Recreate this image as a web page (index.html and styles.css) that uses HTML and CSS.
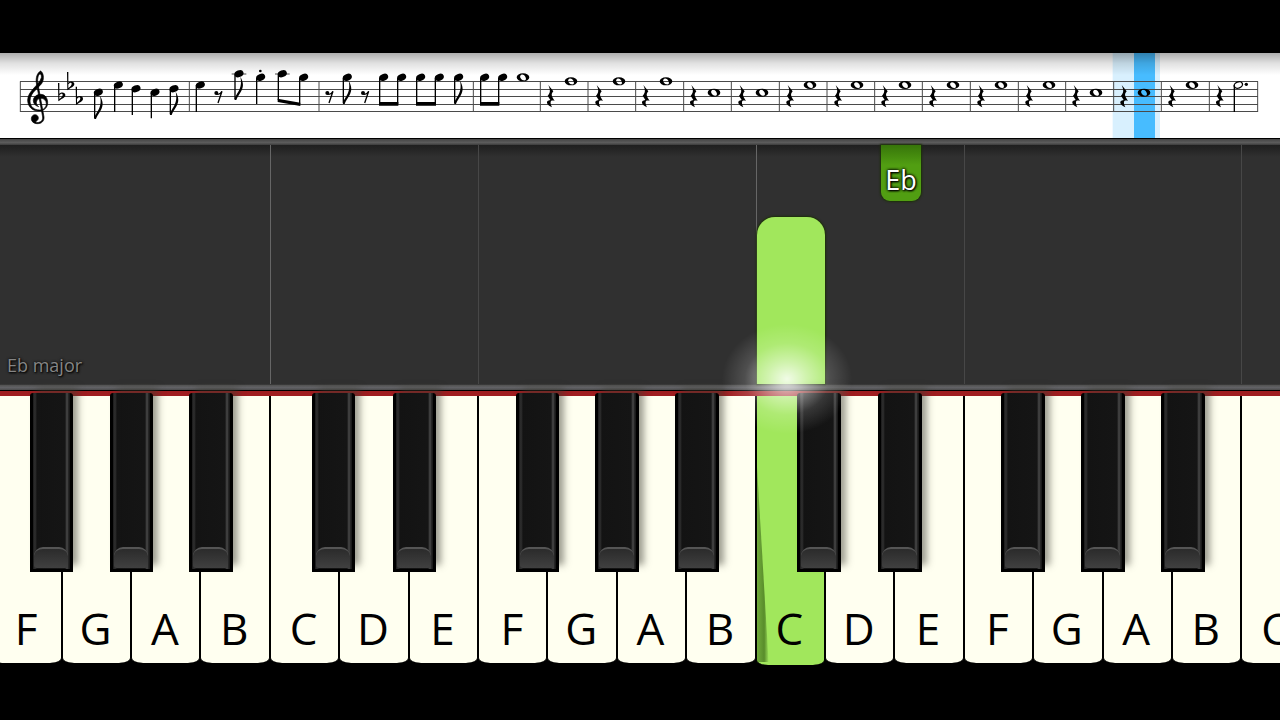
FILE: index.html
```html
<!DOCTYPE html>
<html lang="en">
<head>
  <meta charset="UTF-8">
  <meta name="viewport" content="width=device-width, initial-scale=1">
  <title>Piano lesson</title>
  <link rel="stylesheet" href="styles.css">
</head>
<body>
  <main class="player">

    <!-- Score -->
    <svg class="score" viewBox="0 0 3840 255" role="img" aria-label="Score">
      <defs>
        <linearGradient id="paper" x1="0" y1="0" x2="0" y2="1">
          <stop offset="0" stop-color="#000" stop-opacity=".32"/>
          <stop offset=".12" stop-color="#000" stop-opacity=".12"/>
          <stop offset=".26" stop-color="#000" stop-opacity="0"/>
        </linearGradient>
        <g id="clef" stroke="#000" stroke-width="2">
          <path d="M40 0C49 6 50 22 46 32C40 48 8 62 8 90C8 108 22 117 36 117C50 117 57 108 57 98C57 88 49 82 41 82C32 82 27 88 27 95C27 101 30 104 34 107C24 104 18 98 18 89C18 78 28 70 40 70C52 70 61 80 61 95C61 110 50 120 34 120C14 120 1 106 1 87C1 60 36 42 42 20C43 13 41 9 38 9Z"/>
          <path d="M38 9C33 10 30 22 31 34L50 138C51 150 43 158 31 158C20 158 12 152 12 143C12 136 17 131 23 131C29 131 33 136 33 141C33 147 28 150 25 152C27 155 32 155 35 154C43 152 47 146 46 138L27 36C25 20 29 6 40 0Z"/>
        </g>
        <path id="flat" fill-rule="evenodd" d="M-2 0h4v32c6-6 18-5 18 4c0 8-11 11-21 19zM2 37v11c6-4 10-8 10-13c0-5-7-3-10 2z"/>
        <ellipse id="head" rx="14" ry="10" transform="rotate(-22)"/>
        <path id="flag" d="M-1 0C0-20 25-30 16-70C36-36 13-24 4 0z"/>
        <path id="whole" fill-rule="evenodd" d="M-19 0a19 12 0 1 0 38 0a19 12 0 1 0-38 0zM-8-5C-5-11 3-9 7-2C11 5 8 10 3 9C-3 9-11 1-8-5z"/>
        <path id="rest4" d="M-6 0L9 19C2 27 2 32 13 48C3 44-4 48 5 67C-12 59-16 47 0 45L-8 32C0 24 1 16-6 0z"/>
        <g id="rest8">
          <circle cx="-6" cy="6" r="6"/>
          <path d="M-6 9C2 12 7 8 11 1L-1 36" fill="none" stroke="#000" stroke-width="4"/>
        </g>
      </defs>

      <rect width="3840" height="255" fill="#fff"/>
      <rect x="3338" width="142" height="255" fill="#d8f0fe"/>
      <rect x="3402" width="63" height="255" fill="#47bcff"/>
      <rect width="3840" height="255" fill="url(#paper)"/>

      <!-- staff and bar lines -->
      <path class="staff" d="M60 85.5H3774M60 109.5H3774M60 130.5H3774M60 154.5H3774M60 175.5H3774"/>
      <path class="staff" d="M61 85V177M568 85V177M957 85V177M1420 85V177M1621 85V177M1764 85V177M1907 85V177M2051 85V177M2194 85V177M2338 85V177M2481 85V177M2624 85V177M2767 85V177M2911 85V177M3055 85V177M3197 85V177M3341 85V177M3484 85V177M3628 85V177M3773 85V177"/>

      <use href="#clef" x="82" y="54"/>
      <use href="#flat" x="176" y="90"/>
      <use href="#flat" x="203" y="57"/>
      <use href="#flat" x="229" y="101"/>

      <!-- stems, beams and ledger lines -->
      <path class="stem" d="M284 120V196M344 97V177M397 109V186M454 120V196M511 109V184M589 97V177M705 62V139M770 75V153M835 62V141M899 75V153M1030 75V151M1139 75V153M1193 75V153M1250 75V153M1306 75V153M1364 75V151M1442 75V153M1496 75V153M3703 97V177"/>
      <path d="M833 137L901 149V159L833 147zM1137 147h58v11h-58zM1248 147h60v11h-60zM1440 147h58v11h-58z"/>
      <path class="staff" d="M695 63H739M825 63H869"/>

      <use href="#flag" x="284" y="198"/>
      <use href="#flag" x="511" y="186"/>
      <use href="#flag" x="705" y="141"/>
      <use href="#flag" x="1030" y="153"/>
      <use href="#flag" x="1364" y="153"/>

      <use href="#head" x="295" y="118"/>
      <use href="#head" x="355" y="96"/>
      <use href="#head" x="408" y="107"/>
      <use href="#head" x="465" y="118"/>
      <use href="#head" x="522" y="107"/>
      <use href="#head" x="601" y="96"/>
      <use href="#head" x="717" y="62"/>
      <use href="#head" x="782" y="73"/>
      <use href="#head" x="847" y="62"/>
      <use href="#head" x="911" y="73"/>
      <use href="#head" x="1042" y="73"/>
      <use href="#head" x="1151" y="73"/>
      <use href="#head" x="1205" y="73"/>
      <use href="#head" x="1262" y="73"/>
      <use href="#head" x="1318" y="73"/>
      <use href="#head" x="1376" y="73"/>
      <use href="#head" x="1454" y="73"/>
      <use href="#head" x="1508" y="73"/>
      <circle cx="781" cy="54" r="4"/>

      <use href="#rest8" x="655" y="114"/>
      <use href="#rest8" x="988" y="114"/>
      <use href="#rest8" x="1095" y="114"/>

      <use href="#whole" x="1569" y="73"/>
      <use href="#rest4" x="1651" y="96"/><use href="#whole" x="1713" y="85"/>
      <use href="#rest4" x="1796" y="96"/><use href="#whole" x="1857" y="85"/>
      <use href="#rest4" x="1936" y="96"/><use href="#whole" x="1998" y="85"/>
      <use href="#rest4" x="2080" y="96"/><use href="#whole" x="2142" y="119"/>
      <use href="#rest4" x="2225" y="96"/><use href="#whole" x="2286" y="119"/>
      <use href="#rest4" x="2369" y="96"/><use href="#whole" x="2430" y="96"/>
      <use href="#rest4" x="2513" y="96"/><use href="#whole" x="2571" y="96"/>
      <use href="#rest4" x="2654" y="96"/><use href="#whole" x="2715" y="96"/>
      <use href="#rest4" x="2798" y="96"/><use href="#whole" x="2859" y="96"/>
      <use href="#rest4" x="2942" y="96"/><use href="#whole" x="3003" y="96"/>
      <use href="#rest4" x="3086" y="96"/><use href="#whole" x="3147" y="96"/>
      <use href="#rest4" x="3227" y="96"/><use href="#whole" x="3288" y="119"/>
      <use href="#rest4" x="3371" y="96"/><use href="#whole" x="3432" y="119"/>
      <use href="#rest4" x="3515" y="96"/><use href="#whole" x="3576" y="96"/>
      <use href="#rest4" x="3658" y="96"/>
      <ellipse cx="3715" cy="96" rx="13" ry="9" transform="rotate(-22 3715 96)" fill="none" stroke="#000" stroke-width="4"/>
      <circle cx="3739" cy="94" r="5"/>
    </svg>

    <div class="rail rail-top"></div>

    <!-- Falling notes -->
    <section class="roll">
      <div class="lanes">
        <div class="lane"></div>
        <div class="lane"></div>
        <div class="lane"></div>
        <div class="lane"></div>
        <div class="lane octave"></div>
        <div class="lane"></div>
        <div class="lane"></div>
        <div class="lane split"></div>
        <div class="lane"></div>
        <div class="lane"></div>
        <div class="lane"></div>
        <div class="lane octave">
          <div class="note"></div>
          <div class="glow"></div>
        </div>
        <div class="lane">
          <div class="note-flat">Eb</div>
        </div>
        <div class="lane"></div>
        <div class="lane split"></div>
        <div class="lane"></div>
        <div class="lane"></div>
        <div class="lane"></div>
        <div class="lane split"></div>
      </div>
      <p class="key-name">Eb major</p>
    </section>

    <div class="rail rail-bottom"></div>

    <!-- Keyboard -->
    <section class="keyboard">
      <div class="key key-f"><button class="white">F</button><button class="black" aria-label="F sharp"></button></div>
      <div class="key key-g"><button class="white">G</button><button class="black" aria-label="G sharp"></button></div>
      <div class="key key-a"><button class="white">A</button><button class="black" aria-label="A sharp"></button></div>
      <div class="key"><button class="white">B</button></div>
      <div class="key key-c"><button class="white">C</button><button class="black" aria-label="C sharp"></button></div>
      <div class="key key-d"><button class="white">D</button><button class="black" aria-label="D sharp"></button></div>
      <div class="key"><button class="white">E</button></div>
      <div class="key key-f"><button class="white">F</button><button class="black" aria-label="F sharp"></button></div>
      <div class="key key-g"><button class="white">G</button><button class="black" aria-label="G sharp"></button></div>
      <div class="key key-a"><button class="white">A</button><button class="black" aria-label="A sharp"></button></div>
      <div class="key"><button class="white">B</button></div>
      <div class="key key-c"><button class="white pressed">C</button><button class="black" aria-label="C sharp"></button></div>
      <div class="key key-d"><button class="white">D</button><button class="black" aria-label="D sharp"></button></div>
      <div class="key"><button class="white">E</button></div>
      <div class="key key-f"><button class="white">F</button><button class="black" aria-label="F sharp"></button></div>
      <div class="key key-g"><button class="white">G</button><button class="black" aria-label="G sharp"></button></div>
      <div class="key key-a"><button class="white">A</button><button class="black" aria-label="A sharp"></button></div>
      <div class="key"><button class="white">B</button></div>
      <div class="key"><button class="white">C</button></div>
    </section>

  </main>
</body>
</html>
```

FILE: styles.css
```css
* {
  box-sizing: border-box;
}
body {
  margin: 0;
  background: #000;
  font-family: "Open Sans", "Noto Sans", sans-serif;
}
.player {
  display: flex;
  flex-direction: column;
  min-height: 100vh;
  padding: 53px 0 57px;
  overflow: hidden;
}

/* Score */
.score {
  display: block;
  width: 100%;
}
.staff {
  fill: none;
  stroke: #4a4a4a;
  stroke-width: 3;
}
.stem {
  fill: none;
  stroke: #000;
  stroke-width: 4;
}

/* Rails */
.rail {
  height: 7px;
}
.rail-top {
  border-top: 1px solid #000;
  background: linear-gradient(#444, #5c5c5c 60%, #3c3c3c);
}
.rail-bottom {
  border-bottom: 1px solid #000;
  background: linear-gradient(#2a2a2a, #555 25%, #626266 60%, #4c4c4c);
}

/* Falling notes */
.roll {
  position: relative;
  display: flex;
  flex: 1;
  background: linear-gradient(#1f1f1f, #303030 12px);
}
.lanes,
.keyboard {
  display: grid;
  grid-template-columns: repeat(19, 1fr);
  width: 103%;
  margin-left: -0.6%;
  flex-shrink: 0;
}
.lane {
  position: relative;
  display: flex;
  align-items: flex-end;
}
.octave {
  border-left: 1px solid #666;
}
.split {
  border-left: 1px solid #474747;
}
.note {
  width: 100%;
  height: 70%;
  border-radius: 18px 18px 0 0;
  background: #a1e75c;
  box-shadow: 0 0 2px 1px #1c3008;
}
.note-flat {
  position: absolute;
  top: 0;
  left: 81%;
  z-index: 1;
  display: flex;
  align-items: flex-end;
  justify-content: center;
  width: 57%;
  height: 56px;
  padding-bottom: 5px;
  border-radius: 0 0 9px 9px;
  background: linear-gradient(#37750a, #519e12 20px);
  box-shadow: 0 0 2px 1px #1c3008;
  color: #fff;
  font-size: 27px;
  line-height: 32px;
  text-shadow: 0 0 3px #000, 0 0 3px #000, 1px 1px 2px #000;
}
.glow {
  position: absolute;
  bottom: -50px;
  left: -50%;
  z-index: 4;
  width: 190%;
  height: 110px;
  background: radial-gradient(closest-side, rgba(255,255,255,0.85), rgba(255,255,255,0.5) 30%, rgba(255,255,255,0.15) 65%, rgba(255,255,255,0));
  pointer-events: none;
}
.key-name {
  position: absolute;
  bottom: 6px;
  left: 7px;
  margin: 0;
  color: #858585;
  font-size: 18px;
  line-height: 26px;
  text-shadow: 0 0 3px #000, 1px 1px 2px #000;
}

/* Keyboard */
.keyboard {
  border-top: 5px solid #a01d20;
}
.key {
  position: relative;
  height: 267px;
  background: #000;
}
.white {
  position: relative;
  display: flex;
  align-items: flex-end;
  justify-content: center;
  width: 100%;
  height: 100%;
  padding: 0 2px 6px 0;
  border: solid #000;
  border-width: 0 1px;
  border-radius: 0 0 12px 12px / 0 0 5px 5px;
  background: #fffff0;
  color: #000;
  font-family: inherit;
  font-size: 44px;
  line-height: 58px;
  cursor: pointer;
}
.pressed {
  height: 269px;
  padding-bottom: 8px;
  background: #a1e75c;
}
/* shade down the left side of the pressed key */
.pressed::before {
  content: "";
  position: absolute;
  bottom: 3px;
  left: 0;
  width: 12px;
  height: 75%;
  background: linear-gradient(90deg, rgba(40,80,10,0.4), rgba(40,80,10,0.6) 60%, rgba(40,80,10,0));
  clip-path: polygon(0 0, 100% 100%, 0 100%);
}
.black {
  position: absolute;
  top: -3px;
  z-index: 2;
  width: 63%;
  height: 179px;
  padding: 0;
  border: 3px solid #000;
  border-top: 0;
  border-radius: 3px 3px 0 0;
  background: linear-gradient(90deg, #1a1a1a, #303030 2px, #131313 4px, #151515 calc(100% - 5px), #4a4a4a calc(100% - 3px), #1a1a1a calc(100% - 1px));
  box-shadow: 6px -6px 7px -1px rgba(60,60,50,0.5);
  cursor: pointer;
}
/* front face of the black key */
.black::after {
  content: "";
  position: absolute;
  right: 2px;
  bottom: 1px;
  left: 1px;
  height: 19px;
  border-top: 2px solid #555;
  border-radius: 9px 9px 3px 3px;
  background: linear-gradient(#2b2b2b, #404040);
}
.key-c .black { left: 60%; }
.key-d .black { left: 77%; }
.key-f .black { left: 54%; }
.key-g .black { left: 69%; }
.key-a .black { left: 84%; }
```
